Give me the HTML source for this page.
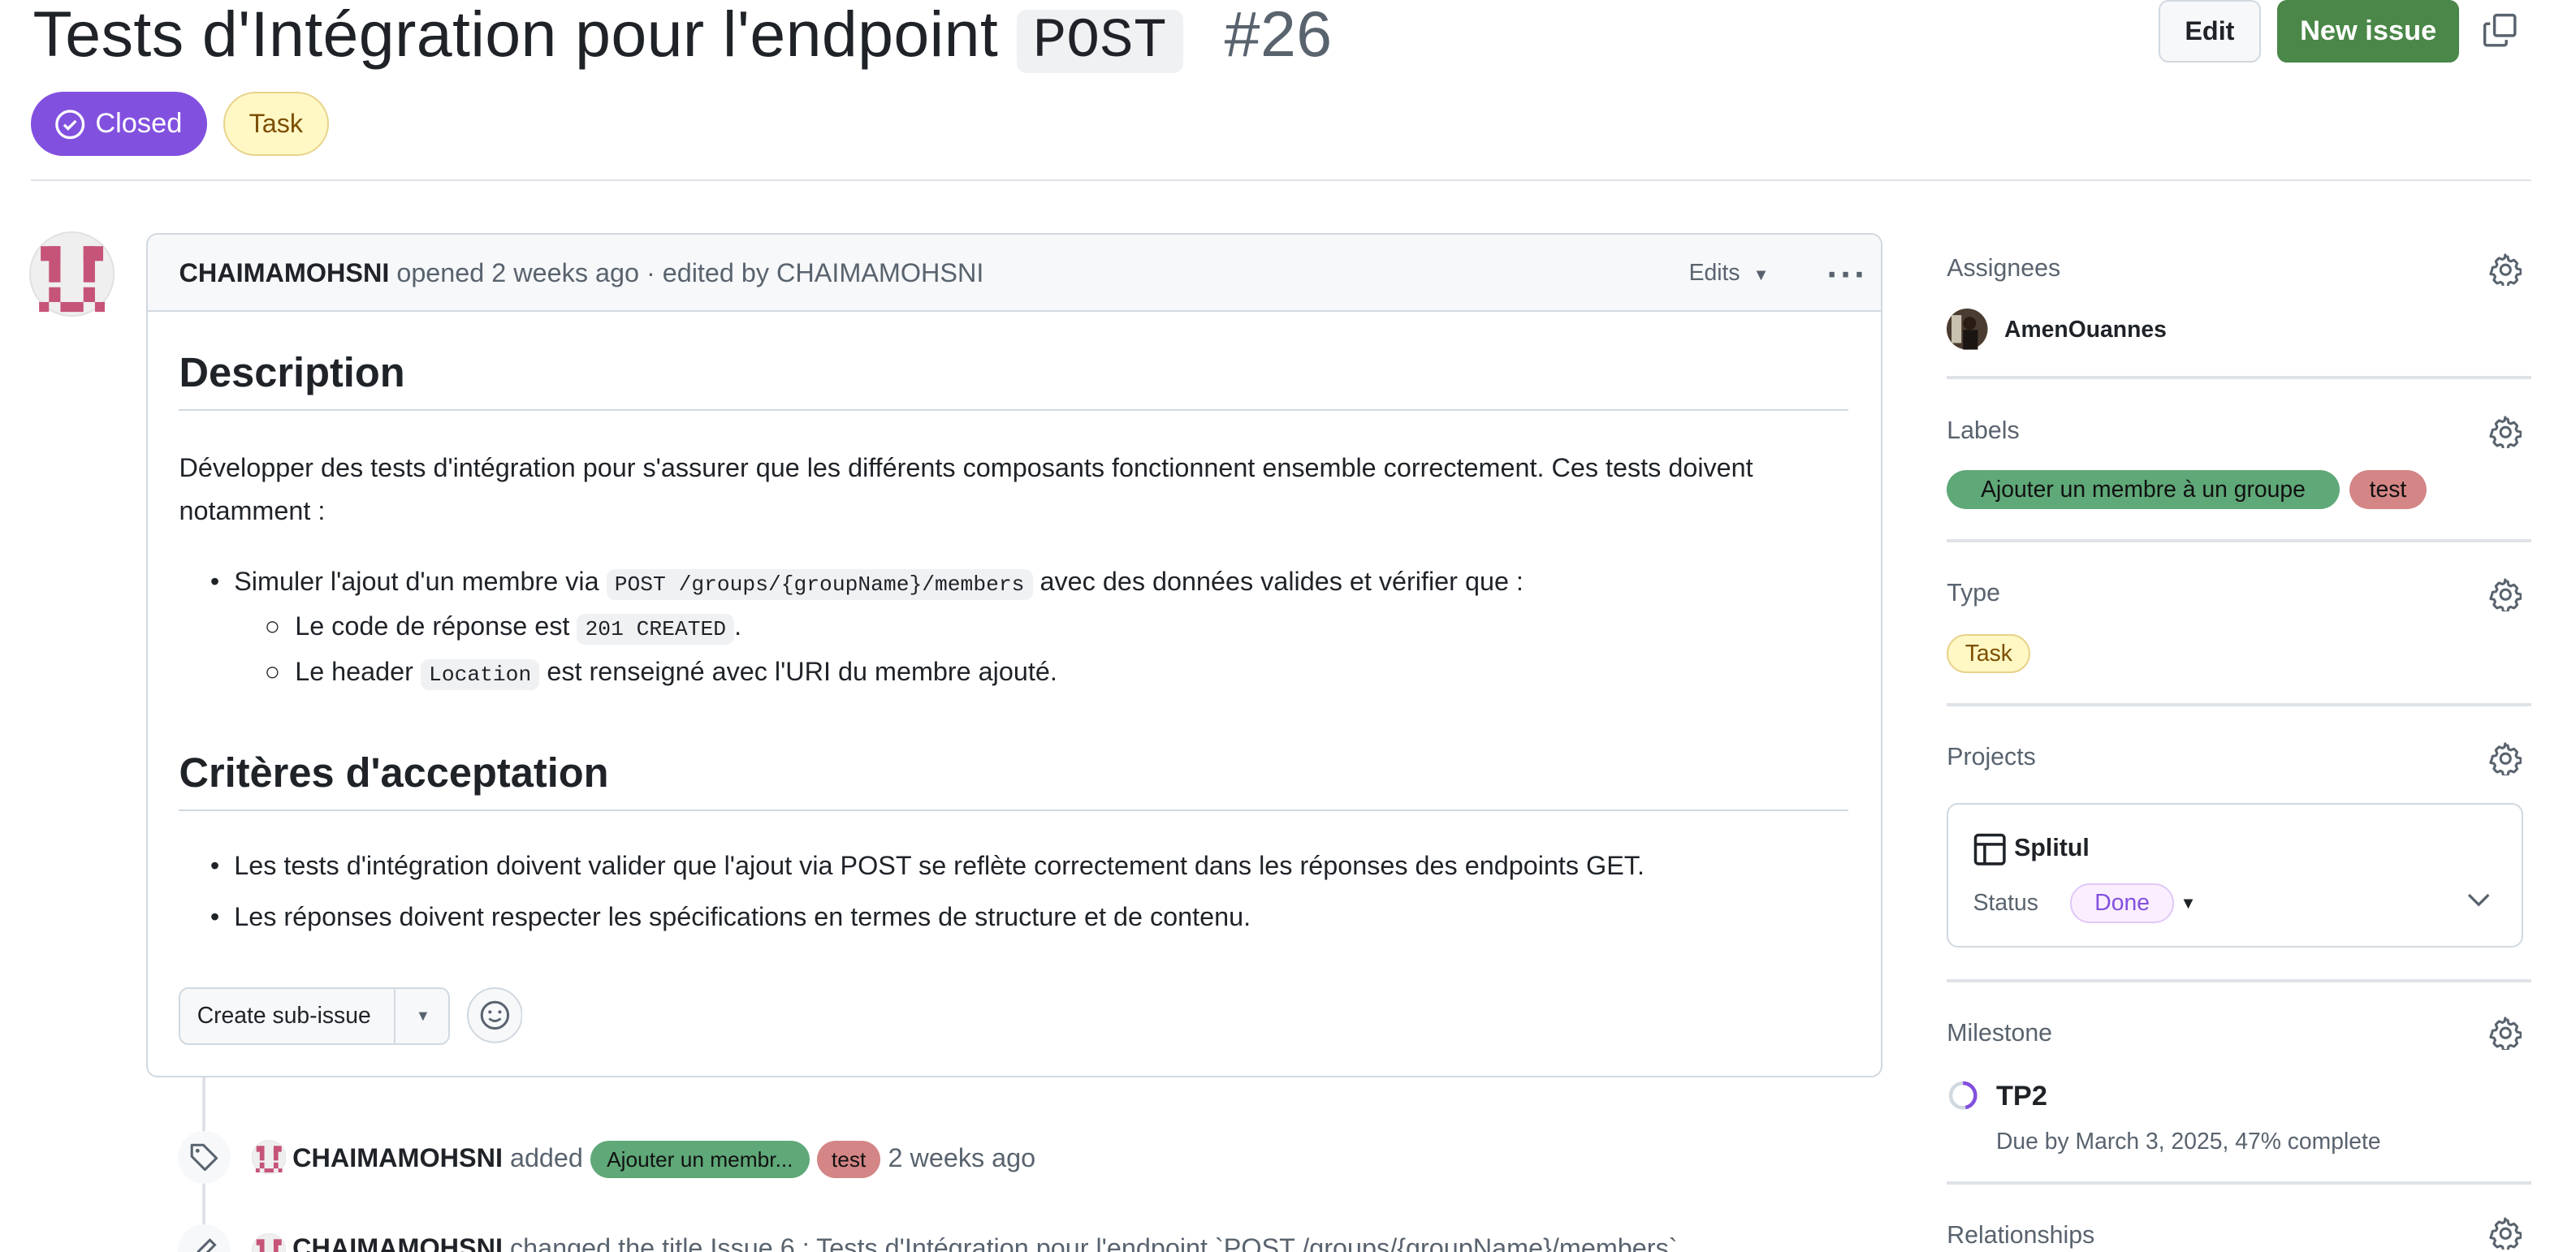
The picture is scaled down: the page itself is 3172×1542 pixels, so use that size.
<!DOCTYPE html>
<html><head><meta charset="utf-8"><style>
html,body{margin:0;padding:0;background:#fff;overflow:hidden}
body{width:3172px;height:1542px}
#r{zoom:2.023;width:1568px;height:762px;position:relative;font-family:"Liberation Sans",sans-serif;color:#1f2328}
.a{position:absolute;white-space:nowrap}
.code{font-family:"Liberation Mono",monospace;background:#eff1f3;border-radius:5px;padding:2px 5px;font-size:13px}
.gear{position:absolute;width:20px;height:20px}
.hl{position:absolute;height:2px;background:#dfe2e6}
.side{font-size:15px;color:#59636e;font-weight:500}
</style></head><body><div id="r">
<div class="a" style="left:20px;top:-3px;font-size:39px;line-height:48px;letter-spacing:0.2px">Tests d'Intégration pour l'endpoint <span style="font-family:'Liberation Mono',monospace;background:#eff1f3;border-radius:6px;padding:0 10px;font-size:34px;letter-spacing:0">POST</span> <span style="color:#59636e;margin-left:14px">#26</span></div>
<div class="a" style="left:1314px;top:0;width:60px;height:36px;border:1px solid #d1d9e0;border-radius:6px;background:#f6f8fa;font-size:16px;line-height:36px;text-align:center;font-weight:600">Edit</div>
<div class="a" style="left:1386px;top:0;width:111px;height:38px;border-radius:6px;background:#4a8748;color:#fff;font-size:17px;line-height:38px;text-align:center;font-weight:600">New issue</div>
<svg class="a" style="left:1511px;top:8px" width="21" height="21" viewBox="0 0 16 16" fill="none" stroke="#59636e" stroke-width="1.3"><rect x="5.5" y="1" width="9.5" height="9.5" rx="1"/><path d="M3.5 5H2a1 1 0 0 0-1 1v8a1 1 0 0 0 1 1h8a1 1 0 0 0 1-1v-1.5"/></svg>
<div class="a" style="left:19px;top:56px;width:107px;height:39px;border-radius:20px;background:#8250df;color:#fff;font-size:17px;line-height:39px"><svg style="position:absolute;left:14px;top:10px" width="19" height="19" viewBox="0 0 16 16" fill="none" stroke="#fff" stroke-width="1.4"><circle cx="8" cy="8" r="6.8"/><path d="M5 8.2l2 2 4-4"/></svg><span style="margin-left:39px">Closed</span></div>
<div class="a" style="left:136px;top:56px;width:62px;height:37px;border-radius:20px;background:#fff8c5;border:1px solid #e8d28a;color:#7d4e00;font-size:16px;line-height:37px;text-align:center">Task</div>
<div class="hl" style="left:19px;top:109px;width:1522px;height:1px"></div>

<svg style="display:none"><defs><g id="av"><circle cx="26" cy="26" r="25.5" fill="#efefef" stroke="#e1e1e1"/><g fill="#c65478"><rect x="7" y="9" width="12" height="9"/><rect x="33" y="9" width="12" height="9"/><rect x="12" y="9" width="7" height="22"/><rect x="33" y="9" width="7" height="22"/><rect x="12" y="34" width="7" height="9"/><rect x="33" y="34" width="7" height="9"/><rect x="6" y="43" width="6" height="6"/><rect x="19" y="43" width="14" height="6"/><rect x="40" y="43" width="6" height="6"/></g></g></defs></svg>
<svg class="a" style="left:18px;top:141px" width="52" height="52" viewBox="0 0 52 52"><use href="#av"/></svg>

<div class="a" style="left:89px;top:142px;width:1055px;height:512px;border:1px solid #d1d9e0;border-radius:7px;overflow:hidden">
 <div style="height:46px;background:#f6f8fa;border-bottom:1px solid #d1d9e0;position:relative">
  <div class="a" style="left:19px;top:14px;font-size:16px;color:#59636e"><b style="color:#1f2328;font-weight:600">CHAIMAMOHSNI</b> opened 2 weeks ago · edited by CHAIMAMOHSNI</div>
  <div class="a" style="left:938px;top:15px;font-size:14px;color:#59636e">Edits <span style="font-size:10px;margin-left:4px">▼</span></div>
  <div class="a" style="left:1022px;top:12px;font-size:22px;color:#59636e;letter-spacing:1px;font-weight:700">···</div>
 </div>
 <div class="a" style="left:19px;top:69px;font-size:25px;font-weight:600">Description</div>
 <div class="hl" style="left:19px;top:106px;width:1016px;height:1px;background:#d1d9e0"></div>
 <div class="a" style="left:19px;top:129px;font-size:16px;line-height:26px;white-space:normal;width:975px">Développer des tests d'intégration pour s'assurer que les différents composants fonctionnent ensemble correctement. Ces tests doivent notamment :</div>
 <div class="a" style="left:38px;top:202px;font-size:16px">•&nbsp;&nbsp;Simuler l'ajout d'un membre via <span class="code">POST /groups/{groupName}/members</span> avec des données valides et vérifier que :</div>
 <div class="a" style="left:71px;top:229px;font-size:16px">○&nbsp;&nbsp;Le code de réponse est <span class="code">201 CREATED</span>.</div>
 <div class="a" style="left:71px;top:257px;font-size:16px">○&nbsp;&nbsp;Le header <span class="code">Location</span> est renseigné avec l'URI du membre ajouté.</div>
 <div class="a" style="left:19px;top:313px;font-size:25px;font-weight:600">Critères d'acceptation</div>
 <div class="hl" style="left:19px;top:350px;width:1016px;height:1px;background:#d1d9e0"></div>
 <div class="a" style="left:38px;top:375px;font-size:16px">•&nbsp;&nbsp;Les tests d'intégration doivent valider que l'ajout via POST se reflète correctement dans les réponses des endpoints GET.</div>
 <div class="a" style="left:38px;top:406px;font-size:16px">•&nbsp;&nbsp;Les réponses doivent respecter les spécifications en termes de structure et de contenu.</div>
 <div class="a" style="left:19px;top:458px;width:163px;height:33px;border:1px solid #d1d9e0;border-radius:6px;background:#f6f8fa;font-size:14px;line-height:33px;font-weight:500"><span style="margin-left:10px">Create sub-issue</span><span style="position:absolute;left:130px;top:0;height:33px;border-left:1px solid #d1d9e0;width:33px;text-align:center;font-size:9px;color:#59636e">▼</span></div>
 <svg class="a" style="left:194px;top:458px" width="34" height="34" viewBox="0 0 34 34"><circle cx="17" cy="17" r="16.5" fill="#f6f8fa" stroke="#d1d9e0"/><circle cx="17" cy="17" r="8" fill="none" stroke="#59636e" stroke-width="1.5"/><circle cx="14" cy="15" r="1" fill="#59636e"/><circle cx="20" cy="15" r="1" fill="#59636e"/><path d="M13.5 19q3.5 3 7 0" fill="none" stroke="#59636e" stroke-width="1.4"/></svg>
</div>

<div class="a" style="left:123px;top:656px;width:2px;height:106px;background:#dfe2e6"></div>
<svg class="a" style="left:108px;top:688px" width="33" height="33" viewBox="0 0 33 33"><circle cx="16.5" cy="16.5" r="16" fill="#f6f8fa"/><path d="M9 9h7l8 8-7 7-8-8z" fill="none" stroke="#59636e" stroke-width="1.5" stroke-linejoin="round"/><circle cx="12.5" cy="12.5" r="1.2" fill="#59636e"/></svg>
<svg class="a" style="left:153px;top:694px" width="21" height="21" viewBox="0 0 52 52"><use href="#av"/></svg>
<div class="a" style="left:178px;top:694px;font-size:16px;color:#59636e;line-height:22px"><b style="color:#1f2328;font-weight:600">CHAIMAMOHSNI</b> added <span style="display:inline-block;background:#5fa878;color:#111;border-radius:12px;padding:0 10px;font-size:13px;line-height:23px">Ajouter un membr...</span> <span style="display:inline-block;background:#d48585;color:#111;border-radius:12px;padding:0 9px;font-size:13px;line-height:23px">test</span> 2 weeks ago</div>
<svg class="a" style="left:108px;top:745px" width="33" height="33" viewBox="0 0 33 33"><circle cx="16.5" cy="16.5" r="16" fill="#f6f8fa"/><path d="M11 22l2-5 7-7 3 3-7 7z" fill="none" stroke="#59636e" stroke-width="1.5"/></svg>
<svg class="a" style="left:153px;top:751px" width="21" height="21" viewBox="0 0 52 52"><use href="#av"/></svg>
<div class="a" style="left:178px;top:751px;font-size:16px;color:#59636e"><b style="color:#1f2328;font-weight:600">CHAIMAMOHSNI</b> changed the title Issue 6 : Tests d'Intégration pour l'endpoint `POST /groups/{groupName}/members`</div>

<!-- sidebar -->
<div class="a side" style="left:1185px;top:155px">Assignees</div>
<svg class="a" style="left:1185px;top:188px" width="25" height="25" viewBox="0 0 25 25"><circle cx="12.5" cy="12.5" r="12.5" fill="#4a3c30"/><rect x="3" y="4" width="6" height="17" fill="#c9c2b0"/><circle cx="14" cy="9" r="4" fill="#2a1c14"/><rect x="10" y="13" width="9" height="12" fill="#1b1512"/></svg>
<div class="a" style="left:1220px;top:193px;font-size:14px;font-weight:600">AmenOuannes</div>
<div class="hl" style="left:1185px;top:229px;width:356px"></div>
<div class="a side" style="left:1185px;top:254px">Labels</div>
<div class="a" style="left:1185px;top:286px;height:24px;line-height:24px;width:239px;text-align:center;background:#5fa878;border-radius:12px;font-size:14px;color:#111">Ajouter un membre à un groupe</div>
<div class="a" style="left:1430px;top:286px;height:24px;line-height:24px;width:47px;text-align:center;background:#d48585;border-radius:12px;font-size:14px;color:#111">test</div>
<div class="hl" style="left:1185px;top:328px;width:356px"></div>
<div class="a side" style="left:1185px;top:353px">Type</div>
<div class="a" style="left:1185px;top:386px;height:22px;line-height:22px;width:49px;text-align:center;background:#fff8c5;border:1px solid #e8d28a;border-radius:12px;font-size:14px;color:#7d4e00">Task</div>
<div class="hl" style="left:1185px;top:428px;width:356px"></div>
<div class="a side" style="left:1185px;top:453px">Projects</div>
<div class="a" style="left:1185px;top:489px;width:349px;height:86px;border:1px solid #d1d9e0;border-radius:7px">
 <svg class="a" style="left:15px;top:17px" width="20" height="20" viewBox="0 0 16 16" fill="none" stroke="#1f2328" stroke-width="1.4"><rect x="1" y="1" width="14" height="14" rx="1.5"/><path d="M1 5.5h14M5.5 5.5V15"/></svg>
 <div class="a" style="left:40px;top:18px;font-size:15px;font-weight:600">Splitul</div>
 <div class="a" style="left:15px;top:52px;font-size:14px;color:#59636e">Status</div>
 <div class="a" style="left:74px;top:48px;height:22px;line-height:22px;padding:0 14px;background:#fbefff;border:1px solid #e1c8f8;border-radius:12px;color:#8250df;font-size:14px">Done</div>
 <div class="a" style="left:141px;top:55px;font-size:10px">▼</div>
 <svg class="a" style="left:315px;top:52px" width="16" height="12" viewBox="0 0 16 12"><path d="M2 3l6 6 6-6" fill="none" stroke="#59636e" stroke-width="1.6"/></svg>
</div>
<div class="hl" style="left:1185px;top:596px;width:356px"></div>
<div class="a side" style="left:1185px;top:621px">Milestone</div>
<svg class="a" style="left:1186px;top:658px" width="18" height="18" viewBox="0 0 18 18"><circle cx="9" cy="9" r="7.5" fill="none" stroke="#d1d9e0" stroke-width="2.2"/><path d="M9 1.5A7.5 7.5 0 0 1 10.5 16.35" fill="none" stroke="#8250df" stroke-width="2.2"/></svg>
<div class="a" style="left:1215px;top:658px;font-size:17px;font-weight:600">TP2</div>
<div class="a" style="left:1215px;top:687px;font-size:14px;color:#59636e">Due by March 3, 2025, 47% complete</div>
<div class="hl" style="left:1185px;top:719px;width:356px"></div>
<div class="a side" style="left:1185px;top:744px">Relationships</div>

<svg style="display:none"><defs><g id="g"><path d="M10 1.8l1.4.3.4 2.1 1.3.7 2-.8 1 .9 1 1.1-.8 2 .7 1.3 2.1.4.3 1.4-.3 1.4-2.1.4-.7 1.3.8 2-1 1.1-1 .9-2-.8-1.3.7-.4 2.1-1.4.3-1.4-.3-.4-2.1-1.3-.7-2 .8-1-.9-1-1.1.8-2-.7-1.3-2.1-.4L1.8 10l.3-1.4 2.1-.4.7-1.3-.8-2 1-1.1 1-.9 2 .8 1.3-.7.4-2.1z" fill="none" stroke="#59636e" stroke-width="1.5" stroke-linejoin="round"/><circle cx="10" cy="10" r="3" fill="none" stroke="#59636e" stroke-width="1.5"/></g></defs></svg>
<svg class="gear" style="left:1515px;top:154px" viewBox="0 0 20 20"><use href="#g"/></svg>
<svg class="gear" style="left:1515px;top:253px" viewBox="0 0 20 20"><use href="#g"/></svg>
<svg class="gear" style="left:1515px;top:352px" viewBox="0 0 20 20"><use href="#g"/></svg>
<svg class="gear" style="left:1515px;top:452px" viewBox="0 0 20 20"><use href="#g"/></svg>
<svg class="gear" style="left:1515px;top:619px" viewBox="0 0 20 20"><use href="#g"/></svg>
<svg class="gear" style="left:1515px;top:741px" viewBox="0 0 20 20"><use href="#g"/></svg>
</div></body></html>
